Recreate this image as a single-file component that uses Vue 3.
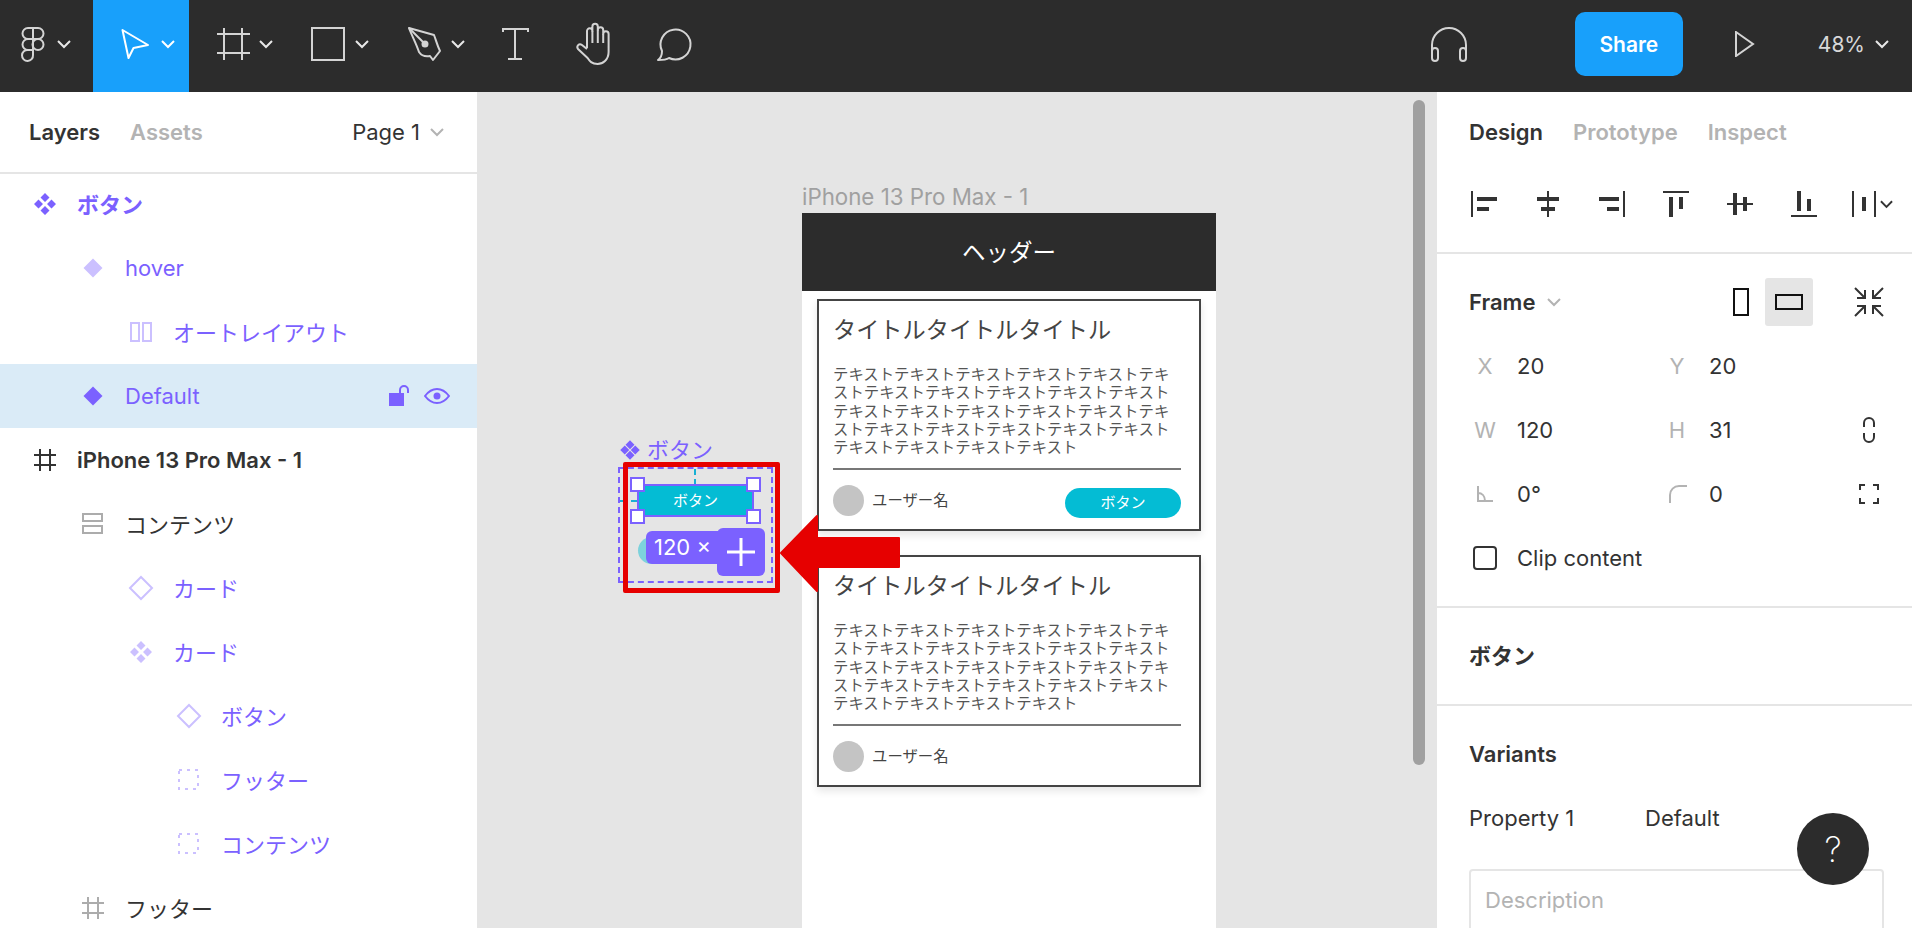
<script setup>
const layers = [
  { name: 'ボタン', depth: 0, icon: 'comp', purple: true, bold: true, jp: true },
  { name: 'hover', depth: 1, icon: 'diamond', purple: true },
  { name: 'オートレイアウト', depth: 2, icon: 'cols', purple: true, jp: true },
  { name: 'Default', depth: 1, icon: 'diamondDark', purple: true, selected: true },
  { name: 'iPhone 13 Pro Max - 1', depth: 0, icon: 'frameDark', bold: true },
  { name: 'コンテンツ', depth: 1, icon: 'rows', jp: true },
  { name: 'カード', depth: 2, icon: 'outline', purple: true, jp: true },
  { name: 'カード', depth: 2, icon: 'compLight', purple: true, jp: true },
  { name: 'ボタン', depth: 3, icon: 'outline', purple: true, jp: true },
  { name: 'フッター', depth: 3, icon: 'dashed', purple: true, jp: true },
  { name: 'コンテンツ', depth: 3, icon: 'dashed', purple: true, jp: true },
  { name: 'フッター', depth: 1, icon: 'frameGray', jp: true }
]

// each align icon is a few bars in a 26 box
const aligns = [
  [[0, 0, 2, 26], [6, 6, 20, 4], [6, 16, 12, 4]],
  [[12, 0, 2, 26], [2, 6, 22, 4], [6, 16, 14, 4]],
  [[24, 0, 2, 26], [0, 6, 20, 4], [8, 16, 12, 4]],
  [[0, 0, 26, 2], [6, 6, 4, 20], [16, 6, 4, 12]],
  [[0, 12, 26, 2], [6, 2, 4, 22], [16, 6, 4, 14]],
  [[0, 24, 26, 2], [6, 0, 4, 20], [16, 8, 4, 12]]
]

const bodyText = 'テキスト'.repeat(26)

const cards = [
  { title: 'タイトルタイトルタイトル', button: true },
  { title: 'タイトルタイトルタイトル', button: false }
]
</script>

<template>
  <div class="app">
    <header class="topbar">
      <div class="tool logo">
        <svg class="ic" width="40" height="40" viewBox="0 0 40 40" fill="none" stroke="#d4d4d4" stroke-width="2">
          <path d="M20 4h-5a5.500 5.500 0 0 0 0 11h5zM20 4h5a5.500 5.500 0 0 1 0 11h-5zM20 15h-5a5.500 5.500 0 0 0 0 11h5z" />
          <circle cx="25" cy="20.500" r="5.500" />
          <path d="M15 26h5v5a5.500 5.500 0 1 1-5-5z" />
        </svg>
        <svg class="chev" width="14" height="9" viewBox="0 0 14 9" fill="none" stroke="#e8e8e8" stroke-width="2"><path d="M1 1l6 6 6-6" /></svg>
      </div>
      <div class="tool active">
        <svg class="ic" width="40" height="40" viewBox="0 0 40 40" fill="none" stroke="#fff" stroke-width="2" stroke-linejoin="round">
          <path d="M7.500 6L33 21l-14.500 3-5 10z" />
        </svg>
        <svg class="chev" width="14" height="9" viewBox="0 0 14 9" fill="none" stroke="#fff" stroke-width="2"><path d="M1 1l6 6 6-6" /></svg>
      </div>
      <div class="tool">
        <svg class="ic" width="40" height="40" viewBox="0 0 40 40" fill="none" stroke="#d4d4d4" stroke-width="2">
          <path d="M4 10h33M4 29h33M11 4v32M29 4v32" />
        </svg>
        <svg class="chev" width="14" height="9" viewBox="0 0 14 9" fill="none" stroke="#e8e8e8" stroke-width="2"><path d="M1 1l6 6 6-6" /></svg>
      </div>
      <div class="tool">
        <svg class="ic" width="40" height="40" viewBox="0 0 40 40" fill="none" stroke="#d4d4d4" stroke-width="2">
          <rect x="3" y="4" width="32" height="32" />
        </svg>
        <svg class="chev" width="14" height="9" viewBox="0 0 14 9" fill="none" stroke="#e8e8e8" stroke-width="2"><path d="M1 1l6 6 6-6" /></svg>
      </div>
      <div class="tool">
        <svg class="ic" width="40" height="40" viewBox="0 0 40 40" fill="none" stroke="#d4d4d4" stroke-width="2" stroke-linejoin="round">
          <path d="M4 4l25 7c2 5 3 10 6 16l-7 9-3-4c-5 1-9-1-11-4C11 19 7 12 4 4z" />
          <path d="M4 4l14 14" />
          <circle cx="20" cy="20" r="2.500" fill="#d4d4d4" />
        </svg>
        <svg class="chev" width="14" height="9" viewBox="0 0 14 9" fill="none" stroke="#e8e8e8" stroke-width="2"><path d="M1 1l6 6 6-6" /></svg>
      </div>
      <div class="tool plain">
        <svg class="ic" width="40" height="40" viewBox="0 0 40 40" fill="none" stroke="#d4d4d4" stroke-width="2">
          <path d="M8 8V5h25v3M20 5v30M13 35h14" />
        </svg>
      </div>
      <div class="tool plain">
        <svg class="ic" width="40" height="44" viewBox="0 0 40 44" fill="none" stroke="#d4d4d4" stroke-width="2" stroke-linejoin="round">
          <path d="M12 26V9a2.700 2.700 0 0 1 5.400 0V4.500a2.700 2.700 0 0 1 5.400 0V8a2.700 2.700 0 0 1 5.400 0v4a2.700 2.700 0 0 1 5.400 0v18c0 8-6 12-11 12-6 0-8-3-10-6L3 27c-2-3 1-6 4-4l5 4" />
          <path d="M17.400 9v12M22.800 8v13M28.200 12v9" />
        </svg>
      </div>
      <div class="tool plain">
        <svg class="ic" width="40" height="40" viewBox="0 0 40 40" fill="none" stroke="#d4d4d4" stroke-width="2" stroke-linejoin="round">
          <path d="M3 36c3-2 4-5 4-9a15 15 0 1 1 7 7c-3 2-7 2-11 2z" />
        </svg>
      </div>

      <div class="top-right">
        <svg class="phones" width="38" height="36" viewBox="0 0 38 36" fill="none" stroke="#d4d4d4" stroke-width="2">
          <path d="M2 30V19a17 17 0 0 1 34 0v11" />
          <rect x="2" y="22" width="6" height="13" rx="3" />
          <rect x="30" y="22" width="6" height="13" rx="3" />
        </svg>
        <div class="share">Share</div>
        <svg class="play" width="20" height="26" viewBox="0 0 20 26" fill="none" stroke="#d4d4d4" stroke-width="2"><path d="M1 1l17 12L1 25z" /></svg>
        <span class="zoom-val">48%</span>
        <svg class="chev" width="14" height="9" viewBox="0 0 14 9" fill="none" stroke="#e8e8e8" stroke-width="2"><path d="M1 1l6 6 6-6" /></svg>
      </div>
    </header>

    <main class="main">
      <aside class="left">
        <div class="tabs">
          <span class="tab on">Layers</span>
          <span class="tab">Assets</span>
          <span class="page">Page 1
            <svg width="14" height="9" viewBox="0 0 14 9" fill="none" stroke="#b3b3b3" stroke-width="2"><path d="M1 1l6 6 6-6" /></svg>
          </span>
        </div>
        <div v-for="(l, i) in layers" :key="i" class="row" :class="{ purple: l.purple, bold: l.bold, sel: l.selected, jp: l.jp }" :style="{ paddingLeft: 29 + l.depth * 48 + 'px' }">
          <svg class="row-ic" width="32" height="32" viewBox="0 0 32 32">
            <g v-if="l.icon === 'comp' || l.icon === 'compLight'" :fill="l.icon === 'comp' ? '#7b61ff' : '#cbc0ff'">
              <path d="M16 5l4.500 4.500L16 14l-4.500-4.500zM16 18l4.500 4.500L16 27l-4.500-4.500zM9.500 11.500L14 16l-4.500 4.500L5 16zM22.500 11.500L27 16l-4.500 4.500L18 16z" />
            </g>
            <path v-else-if="l.icon === 'diamond'" d="M16 6.500L25.500 16 16 25.500 6.500 16z" fill="#cbc0ff" />
            <path v-else-if="l.icon === 'diamondDark'" d="M16 6.500L25.500 16 16 25.500 6.500 16z" fill="#7b61ff" />
            <path v-else-if="l.icon === 'outline'" d="M16 5L27 16 16 27 5 16z" fill="none" stroke="#cbc0ff" stroke-width="2" />
            <g v-else-if="l.icon === 'cols'" fill="none" stroke="#cbc0ff" stroke-width="2">
              <rect x="6" y="7" width="8" height="18" />
              <rect x="18" y="7" width="8" height="18" />
            </g>
            <g v-else-if="l.icon === 'rows'" fill="none" stroke="#acacac" stroke-width="2">
              <rect x="6" y="6" width="19" height="7" />
              <rect x="6" y="18" width="19" height="7" />
            </g>
            <rect v-else-if="l.icon === 'dashed'" x="6" y="6" width="19" height="19" fill="none" stroke="#cbc0ff" stroke-width="2" stroke-dasharray="3 5" />
            <path v-else d="M5 11h22M5 21h22M11 5v22M21 5v22" fill="none" :stroke="l.icon === 'frameDark' ? '#333' : '#acacac'" stroke-width="2" />
          </svg>
          <span class="row-name">{{ l.name }}</span>
          <span v-if="l.selected" class="row-tools">
            <svg width="20" height="22" viewBox="0 0 20 22" fill="none">
              <rect x="0" y="8" width="15" height="13" fill="#7b61ff" />
              <path d="M11 8V5a4 4 0 0 1 8 0v3" stroke="#7b61ff" stroke-width="2" />
            </svg>
            <svg width="26" height="16" viewBox="0 0 26 16" fill="none">
              <path d="M1 8c3-4 7-7 12-7s9 3 12 7c-3 4-7 7-12 7S4 12 1 8z" stroke="#7b61ff" stroke-width="2" />
              <circle cx="13" cy="8" r="3.500" fill="#7b61ff" />
            </svg>
          </span>
        </div>
      </aside>

      <section class="canvas">
        <div class="frame-label">iPhone 13 Pro Max - 1</div>
        <div class="frame">
          <div class="frame-head">ヘッダー</div>
          <div v-for="(c, i) in cards" :key="i" class="card">
            <div class="card-title">{{ c.title }}</div>
            <p class="card-text">{{ bodyText }}</p>
            <div class="card-foot">
              <div class="avatar"></div>
              <span class="user">ユーザー名</span>
              <span v-if="c.button" class="pill">ボタン</span>
            </div>
          </div>
        </div>

        <div class="set-label">
          <svg width="24" height="24" viewBox="0 0 32 32" fill="#7b61ff">
            <path d="M16 3l6 6-6 6-6-6zM16 17l6 6-6 6-6-6zM9 10l6 6-6 6-6-6zM23 10l6 6-6 6-6-6z" />
          </svg>
          <span>ボタン</span>
        </div>
        <div class="set">
          <div class="guide-v"></div>
          <div class="guide-h"></div>
          <div class="variant-ghost"></div>
          <div class="variant">
            ボタン
            <i class="h tl"></i><i class="h tr"></i><i class="h bl"></i><i class="h br"></i>
          </div>
          <div class="size-tag">120 × 31</div>
          <div class="plus">
            <svg width="28" height="28" viewBox="0 0 28 28" stroke="#fff" stroke-width="3"><path d="M14 0v28M0 14h28" /></svg>
          </div>
        </div>
        <div class="red-box"></div>
        <svg class="red-arrow" width="122" height="80" viewBox="0 0 122 80" fill="#e60000" stroke="#e60000" stroke-width="2" stroke-linejoin="round">
          <path d="M2 39L38 2V24H120V53H38V77z" />
        </svg>
        <div class="scroll"></div>
      </section>

      <aside class="right">
        <div class="tabs right-tabs">
          <span class="tab on">Design</span>
          <span class="tab">Prototype</span>
          <span class="tab">Inspect</span>
        </div>
        <div class="align-row">
          <svg v-for="(a, i) in aligns" :key="i" width="26" height="26" viewBox="0 0 26 26" fill="#333">
            <rect v-for="(r, j) in a" :key="j" :x="r[0]" :y="r[1]" :width="r[2]" :height="r[3]" />
          </svg>
          <span class="dist">
            <svg width="24" height="26" viewBox="0 0 24 26" fill="#333">
              <rect x="0" y="0" width="2" height="26" /><rect x="22" y="0" width="2" height="26" /><rect x="10" y="6" width="4" height="14" />
            </svg>
            <svg width="13" height="9" viewBox="0 0 14 9" fill="none" stroke="#333" stroke-width="2"><path d="M1 1l6 6 6-6" /></svg>
          </span>
        </div>
        <div class="sect frame-sect">
          <div class="frame-top">
            <span class="strong">Frame</span>
            <svg class="frame-chev" width="14" height="9" viewBox="0 0 14 9" fill="none" stroke="#b3b3b3" stroke-width="2"><path d="M1 1l6 6 6-6" /></svg>
            <svg class="portrait" width="16" height="28" viewBox="0 0 16 28" fill="none" stroke="#111" stroke-width="2"><rect x="1" y="1" width="14" height="26" /></svg>
            <div class="land-box">
              <svg width="28" height="16" viewBox="0 0 28 16" fill="none" stroke="#111" stroke-width="2"><rect x="1" y="1" width="26" height="14" /></svg>
            </div>
            <svg class="resize" width="30" height="30" viewBox="0 0 30 30" fill="none" stroke="#333" stroke-width="2">
              <path d="M1 1l10 10M3 11h8V3M29 1L19 11M27 11h-8V3M1 29l10-10M3 19h8v8M29 29L19 19M27 19h-8v8" />
            </svg>
          </div>
          <div class="prop-row">
            <span class="lbl">X</span><span>20</span><span class="lbl">Y</span><span>20</span><i></i>
          </div>
          <div class="prop-row">
            <span class="lbl">W</span><span>120</span><span class="lbl">H</span><span>31</span>
            <svg class="prop-ic" width="12" height="26" viewBox="0 0 12 26" fill="none" stroke="#333" stroke-width="2">
              <path d="M1 10V6a5 5 0 0 1 10 0v4M1 16v4a5 5 0 0 0 10 0v-4" />
            </svg>
          </div>
          <div class="prop-row">
            <svg class="lbl-ic" width="16" height="16" viewBox="0 0 16 16" fill="none" stroke="#b3b3b3" stroke-width="2">
              <path d="M1 0v15h15M1 7c4 0 7 3 7 8" />
            </svg>
            <span>0°</span>
            <svg class="lbl-ic" width="18" height="18" viewBox="0 0 18 18" fill="none" stroke="#b3b3b3" stroke-width="2">
              <path d="M1 18v-8a9 9 0 0 1 9-9h8" />
            </svg>
            <span>0</span>
            <svg class="prop-ic" width="20" height="20" viewBox="0 0 20 20" fill="none" stroke="#333" stroke-width="2">
              <path d="M1 6V1h5M14 1h5v5M19 14v5h-5M6 19H1v-5" />
            </svg>
          </div>
          <div class="clip-row">
            <span class="check"></span>
            <span>Clip content</span>
          </div>
        </div>
        <div class="sect comp-name strong">ボタン</div>
        <div class="variants">
          <div class="strong var-title">Variants</div>
          <div class="var-row">
            <span class="var-key">Property 1</span>
            <span>Default</span>
          </div>
          <div class="desc">Description</div>
        </div>
      </aside>
    </main>
    <div class="help">?</div>
  </div>
</template>

<style scoped>
.app {
  position: relative;
  width: 1912px;
  height: 928px;
  overflow: hidden;
  display: flex;
  flex-direction: column;
  font-family: Inter, "Noto Sans CJK JP", sans-serif;
  font-size: 22px;
  color: #333;
  background: #fff;
}
.topbar {
  height: 92px;
  flex: none;
  display: flex;
  background: #2c2c2c;
}
.tool {
  width: 96px;
  display: flex;
  align-items: center;
  padding-left: 24px;
  padding-bottom: 4px;
  box-sizing: border-box;
}
.tool .chev {
  margin-left: 6px;
}
.tool.logo {
  width: 93px;
  padding-left: 13px;
}
.tool.logo .chev {
  margin-left: 4px;
}
.tool.active {
  background: #18a0fb;
  padding-left: 22px;
}
.tool.plain {
  width: 80px;
  padding-left: 18px;
}
.top-right {
  margin-left: auto;
  display: flex;
  align-items: center;
  padding-right: 23px;
  padding-bottom: 4px;
}
.phones {
  margin-right: 107px;
}
.share {
  width: 108px;
  height: 64px;
  border-radius: 10px;
  background: #18a0fb;
  color: #fff;
  font-weight: 600;
  font-size: 21px;
  display: flex;
  align-items: center;
  justify-content: center;
}
.play {
  margin-left: 52px;
}
.zoom-val {
  margin-left: 63px;
  color: #d8d8d8;
  font-size: 21px;
  margin-right: 10px;
}

.main {
  flex: 1;
  display: flex;
  min-height: 0;
}
.left {
  width: 477px;
  flex: none;
  overflow: hidden;
}
.tabs {
  height: 80px;
  border-bottom: 2px solid #e5e5e5;
  display: flex;
  align-items: center;
  padding-left: 29px;
  padding-right: 33px;
  gap: 30px;
  margin-bottom: -2px;
}
.tab {
  color: #b3b3b3;
  font-weight: 600;
}
.tab.on {
  color: #333;
}
.page {
  margin-left: auto;
  display: flex;
  align-items: center;
  gap: 10px;
}
.row {
  height: 64px;
  display: flex;
  align-items: center;
  box-sizing: border-box;
}
.row-ic {
  flex: none;
  margin-right: 16px;
}
.row-name {
  white-space: nowrap;
  font-weight: 400;
}
.row.jp .row-name {
  margin-bottom: 3px;
}
.row.purple .row-name {
  color: #7b61ff;
}
.row.bold .row-name {
  font-weight: 600;
}
.row.sel {
  background: #daebf7;
}
.row-tools {
  margin-left: auto;
  padding-right: 27px;
  display: flex;
  align-items: center;
  gap: 15px;
}

.canvas {
  position: relative;
  flex: 1;
  background: #e5e5e5;
  overflow: hidden;
}
.frame-label {
  position: absolute;
  left: 325px;
  top: 92px;
  color: #a0a0a0;
  font-size: 22.300px;
  line-height: 26px;
  white-space: nowrap;
}
.frame {
  position: absolute;
  left: 325px;
  top: 121px;
  bottom: 0;
  width: 414px;
  background: #fff;
}
.frame-head {
  height: 78px;
  background: #2c2c2c;
  color: #fff;
  font-size: 23.500px;
  display: flex;
  align-items: center;
  justify-content: center;
  margin-bottom: 8px;
  padding-bottom: 2px;
  box-sizing: border-box;
}
.card {
  margin: 0 15px 24px 15px;
  height: 232px;
  box-sizing: border-box;
  border: 2px solid #444;
  padding: 13px 16px 0 14px;
  box-shadow: 0 4px 8px rgba(0, 0, 0, 0.1);
  background: #fff;
}
.card-title {
  font-size: 23.200px;
  line-height: 32px;
  color: #444;
}
.card-text {
  margin: 20px 0 0;
  font-size: 15.400px;
  line-height: 18.300px;
  color: #555;
  word-break: break-all;
  width: 341px;
  padding-bottom: 11px;
}
.card-foot {
  border-top: 2px solid #777;
  padding-top: 15px;
  display: flex;
  align-items: flex-start;
  width: 348px;
}
.avatar {
  width: 31px;
  height: 31px;
  border-radius: 50%;
  background: #c4c4c4;
  flex: none;
}
.user {
  margin-left: 8px;
  font-size: 15.400px;
  line-height: 31px;
  color: #444;
}
.pill {
  margin-left: auto;
  margin-top: 3px;
  width: 116px;
  height: 30px;
  border-radius: 15px;
  background: #04bcd4;
  color: #fff;
  font-size: 15px;
  line-height: 30px;
  text-align: center;
}

.set-label {
  position: absolute;
  left: 141px;
  top: 345px;
  display: flex;
  align-items: center;
  gap: 5px;
  color: #7b61ff;
  font-size: 22px;
  line-height: 26px;
}
.set {
  position: absolute;
  left: 141px;
  top: 375px;
  width: 155px;
  height: 116px;
  box-sizing: border-box;
  border: 2px dashed #7b61ff;
}
.guide-v {
  position: absolute;
  left: 74px;
  top: 0;
  height: 16px;
  border-left: 2px dashed #18b0d4;
}
.guide-h {
  position: absolute;
  left: 0;
  top: 31px;
  width: 17px;
  border-top: 2px dashed #18b0d4;
}
.variant-ghost {
  position: absolute;
  left: 18px;
  top: 68px;
  width: 40px;
  height: 27px;
  border-radius: 14px 0 0 14px;
  background: #7dd2dc;
}
.variant {
  position: absolute;
  left: 17px;
  top: 15px;
  width: 117px;
  height: 33px;
  box-sizing: border-box;
  border: 2px solid #7b61ff;
  background: #04bcd4;
  color: #fff;
  font-size: 15px;
  line-height: 29px;
  text-align: center;
}
.h {
  position: absolute;
  width: 15px;
  height: 15px;
  box-sizing: border-box;
  background: #fff;
  border: 2px solid #7b61ff;
}
.tl { left: -9px; top: -9px; }
.tr { right: -9px; top: -9px; }
.bl { left: -9px; bottom: -9px; }
.br { right: -9px; bottom: -9px; }
.size-tag {
  position: absolute;
  left: 26px;
  top: 62px;
  height: 33px;
  border-radius: 6px;
  background: #7b61ff;
  color: #fff;
  font-size: 22px;
  line-height: 33px;
  padding: 0 8px;
  white-space: nowrap;
}
.plus {
  position: absolute;
  left: 97px;
  top: 59px;
  width: 48px;
  height: 48px;
  border-radius: 6px;
  background: #7b61ff;
  display: flex;
  align-items: center;
  justify-content: center;
}
.red-box {
  position: absolute;
  left: 146px;
  top: 370px;
  width: 157px;
  height: 131px;
  box-sizing: border-box;
  border: 5px solid #e60000;
  border-radius: 2px;
}
.red-arrow {
  position: absolute;
  left: 302px;
  top: 422px;
}
.scroll {
  position: absolute;
  left: 936px;
  top: 8px;
  width: 12px;
  height: 665px;
  border-radius: 6px;
  background: #a0a0a0;
}

.right {
  width: 475px;
  flex: none;
  overflow: hidden;
}
.right-tabs {
  padding-left: 32px;
  border-bottom: 0;
  margin-bottom: 0;
}
.align-row {
  height: 82px;
  box-sizing: border-box;
  border-bottom: 2px solid #e5e5e5;
  padding-left: 34px;
  padding-top: 19px;
  display: flex;
  gap: 38px;
  align-items: flex-start;
}
.dist {
  margin-left: -3px;
  display: flex;
  align-items: center;
  gap: 4px;
}
.frame-sect {
  padding: 24px 28px 16px 32px;
  border-bottom: 2px solid #e5e5e5;
}
.frame-top {
  height: 48px;
  display: flex;
  align-items: center;
  margin-bottom: 8px;
}
.strong {
  font-weight: 600;
}
.frame-chev {
  margin-left: 12px;
}
.portrait {
  margin-left: auto;
}
.land-box {
  width: 48px;
  height: 48px;
  margin-left: 16px;
  background: #e5e5e5;
  border-radius: 3px;
  display: flex;
  align-items: center;
  justify-content: center;
}
.resize {
  margin-left: 41px;
}
.prop-row {
  height: 64px;
  display: grid;
  grid-template-columns: 48px 144px 48px 1fr 30px;
  align-items: center;
}
.lbl {
  width: 32px;
  text-align: center;
  color: #b3b3b3;
}
.lbl-ic {
  margin-left: 8px;
}
.prop-ic {
  justify-self: center;
}
.clip-row {
  height: 64px;
  display: flex;
  align-items: center;
}
.check {
  width: 24px;
  height: 24px;
  margin-left: 4px;
  margin-right: 20px;
  box-sizing: border-box;
  border: 2px solid #333;
  border-radius: 4px;
}
.comp-name {
  height: 91px;
  padding-bottom: 5px;
  display: flex;
  align-items: center;
  padding-left: 32px;
  border-bottom: 2px solid #e5e5e5;
}
.variants {
  padding: 32px 28px 0 32px;
}
.var-title {
  line-height: 32px;
}
.var-row {
  margin-top: 32px;
  line-height: 32px;
  display: flex;
}
.var-key {
  width: 176px;
}
.desc {
  margin-top: 35px;
  height: 120px;
  box-sizing: border-box;
  border: 2px solid #e5e5e5;
  border-radius: 4px;
  padding: 15px 14px;
  color: #b3b3b3;
  line-height: 28px;
}
.help {
  position: absolute;
  left: 1797px;
  top: 813px;
  width: 72px;
  height: 72px;
  border-radius: 50%;
  background: #2c2c2c;
  color: #fff;
  font-size: 35px;
  font-weight: 200;
  display: flex;
  align-items: center;
  justify-content: center;
}
</style>
